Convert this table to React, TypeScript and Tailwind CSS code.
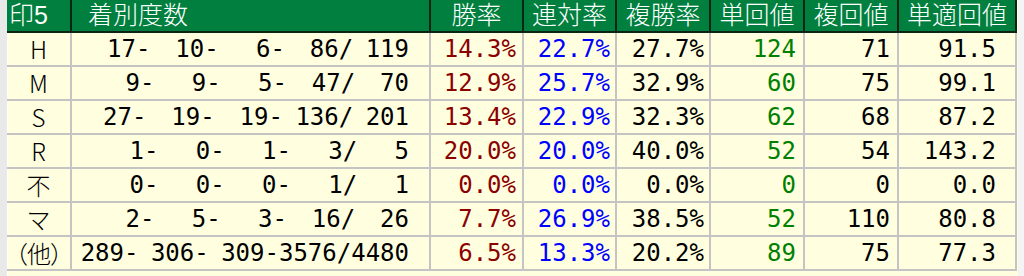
const HEAD = [
  { label: "印5", align: "justify-start pl-[2px]" },
  { label: "着別度数", align: "justify-start pl-[16px]" },
  { label: "勝率", align: "justify-center" },
  { label: "連対率", align: "justify-center" },
  { label: "複勝率", align: "justify-center" },
  { label: "単回値", align: "justify-center" },
  { label: "複回値", align: "justify-center" },
  { label: "単適回値", align: "justify-center" },
]

type Row = {
  mark: string
  counts: [number, number, number, number, number]
  win: string
  rentai: string
  fukusho: string
  tan: string
  fuku: string
  tekiTan: string
}

const ROWS: Row[] = [
  { mark: "H", counts: [17, 10, 6, 86, 119], win: "14.3%", rentai: "22.7%", fukusho: "27.7%", tan: "124", fuku: "71", tekiTan: "91.5" },
  { mark: "M", counts: [9, 9, 5, 47, 70], win: "12.9%", rentai: "25.7%", fukusho: "32.9%", tan: "60", fuku: "75", tekiTan: "99.1" },
  { mark: "S", counts: [27, 19, 19, 136, 201], win: "13.4%", rentai: "22.9%", fukusho: "32.3%", tan: "62", fuku: "68", tekiTan: "87.2" },
  { mark: "R", counts: [1, 0, 1, 3, 5], win: "20.0%", rentai: "20.0%", fukusho: "40.0%", tan: "52", fuku: "54", tekiTan: "143.2" },
  { mark: "不", counts: [0, 0, 0, 1, 1], win: "0.0%", rentai: "0.0%", fukusho: "0.0%", tan: "0", fuku: "0", tekiTan: "0.0" },
  { mark: "マ", counts: [2, 5, 3, 16, 26], win: "7.7%", rentai: "26.9%", fukusho: "38.5%", tan: "52", fuku: "110", tekiTan: "80.8" },
  { mark: "（他）", counts: [289, 306, 309, 3576, 4480], win: "6.5%", rentai: "13.3%", fukusho: "20.2%", tan: "89", fuku: "75", tekiTan: "77.3" },
]

const pad = (n: number) => String(n).padStart(4, " ")

function countsText(c: Row["counts"]) {
  return `${pad(c[0])}-${pad(c[1])}-${pad(c[2])}-${pad(c[3])}/${pad(c[4])}`
}

const MONO = "font-['DejaVu_Sans_Mono','Noto_Sans_CJK_JP',monospace]"
const CELL = "h-[34px] border-b-2 border-r-2 border-[#c4c4c4] flex items-center whitespace-pre text-[24px] leading-none"

export default function App() {
  return (
    <div className="w-[1024px] h-[276px] overflow-hidden flex bg-[#ececec]">
      <div className="w-[8px] shrink-0 bg-[#e9e9e9] border-r border-white" />
      <div className="w-[1010px] shrink-0 bg-[#ffffe0]">
        <div className="grid grid-cols-[65px_359px_93px_93px_94px_94px_94px_118px] -ml-px">
          {HEAD.map(({ label, align }) => (
            <div
              key={label}
              className={`h-[33px] flex items-center bg-[#007f3e] border-b-2 border-r-2 border-[#0b2413] text-white text-[25px] leading-[31px] font-['Liberation_Sans','Noto_Sans_CJK_JP',sans-serif] font-light ${align}`}
            >
              {label}
            </div>
          ))}

          {ROWS.map((r) => (
            <div key={r.mark} className="contents">
              <div
                className={`${CELL} justify-center font-['Noto_Sans_CJK_JP',sans-serif] font-light text-black ${
                  r.mark.length > 1 ? "text-[22px] tracking-[-1px]" : "text-[23px]"
                }`}
              >
                {r.mark}
              </div>
              <div className={`${CELL} ${MONO} justify-end pr-[20px] text-black [word-spacing:-2px]`}>
                {countsText(r.counts)}
              </div>
              <div className={`${CELL} ${MONO} justify-end pr-[6px] text-[#8b0000]`}>{r.win}</div>
              <div className={`${CELL} ${MONO} justify-end pr-[5px] text-[#0000ff]`}>{r.rentai}</div>
              <div className={`${CELL} ${MONO} justify-end pr-[5px] text-black`}>{r.fukusho}</div>
              <div className={`${CELL} ${MONO} justify-end pr-[7px] text-[#008000]`}>{r.tan}</div>
              <div className={`${CELL} ${MONO} justify-end pr-[7px] text-black`}>{r.fuku}</div>
              <div className={`${CELL} ${MONO} justify-end pr-[19px] text-black`}>{r.tekiTan}</div>
            </div>
          ))}
        </div>
      </div>
      <div className="flex-1 bg-[#f4f4f4]" />
    </div>
  )
}
